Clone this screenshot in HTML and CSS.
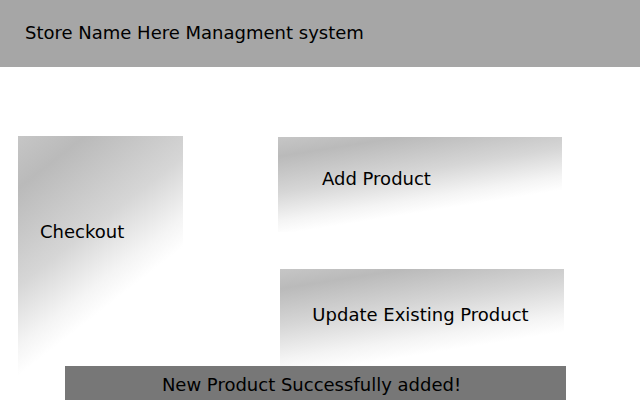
FILE: index.html
```html
<!DOCTYPE html>
<html lang="en">
<head>
    <meta charset="UTF-8">
    <title>Store Name Here Managment system</title>
    <link rel="stylesheet" href="styles.css">
</head>
<body>
    <div class="header">
        <h1>Store Name Here Managment system</h1>
    </div>

    <div class="menu">
        <div class="card checkout-card">Checkout</div>
        <div class="side-column">
            <div class="card add-card">Add Product</div>
            <div class="card update-card">Update Existing Product</div>
        </div>
    </div>

    <div class="status-bar">New Product Successfully added!</div>
</body>
</html>
```

FILE: styles.css
```css
body {
    font-family: "DejaVu Sans", "Liberation Sans", sans-serif;
    font-size: 18px;
    color: #000;
    background: white;
    margin: 0;
    width: 640px;
    height: 400px;
    overflow: hidden;
    position: relative;
}
.header {
    background: #a6a6a6;
    height: 67px;
    display: flex;
    align-items: center;
    padding-left: 25px;
}
h1 {
    font-size: 18px;
    font-weight: normal;
    margin: 0 0 2px 0;
}
.menu {
    display: flex;
    align-items: flex-start;
    padding: 69px 0 0 18px;
}
.card {
    box-sizing: border-box;
}
.checkout-card {
    width: 165px;
    height: 246px;
    padding: 85px 0 0 22px;
    background: linear-gradient(142deg, #c6c6c6 0%, #bababa 14%, #d6d6d6 40%, #f4f4f4 56%, #ffffff 64%);
}
.side-column {
    display: flex;
    flex-direction: column;
    margin-left: 95px;
    margin-top: 1px;
    gap: 37px;
}
.add-card {
    width: 284px;
    height: 95px;
    padding: 31px 0 0 44px;
    background: linear-gradient(171deg, #c6c6c6 0%, #bababa 14%, #d6d6d6 40%, #f4f4f4 60%, #ffffff 70%);
}
.update-card {
    width: 284px;
    height: 97px;
    margin-left: 2px;
    padding: 35px 3px 0 0;
    text-align: center;
    background: linear-gradient(171deg, #c6c6c6 0%, #bababa 14%, #d6d6d6 40%, #f4f4f4 64%, #ffffff 76%);
}
.status-bar {
    position: absolute;
    left: 65px;
    top: 366px;
    width: 501px;
    height: 34px;
    padding-right: 8px;
    box-sizing: border-box;
    background: #777777;
    text-align: center;
    line-height: 37px;
}
```
